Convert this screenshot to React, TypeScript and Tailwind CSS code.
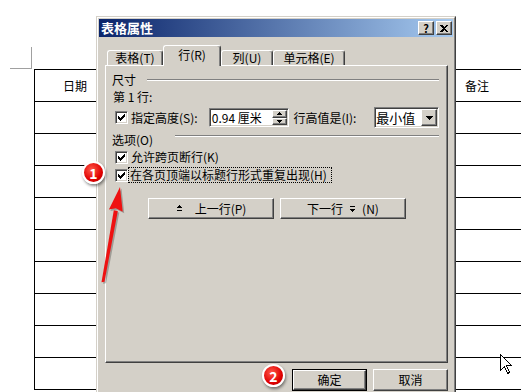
import React from "react";

const face = "bg-[#d4d0c8]";
const raised =
  "border border-t-white border-l-white border-r-[#404040] border-b-[#404040] shadow-[inset_-1px_-1px_#808080]";
const sunken =
  "border border-t-[#808080] border-l-[#808080] border-r-white border-b-white shadow-[inset_1px_1px_#404040,inset_-1px_-1px_#d4d0c8]";

const CHECK = ["......#", ".....##", "#...###", "##.###.", "#####..", ".###...", "..#...."];

function CheckBox() {
  return (
    <span className={`flex h-[13px] w-[13px] shrink-0 items-center justify-center bg-white ${sunken}`}>
      <svg width="7" height="7" viewBox="0 0 7 7" shapeRendering="crispEdges">
        {CHECK.flatMap((row, y) =>
          row.split("").map((c, x) => (c === "#" ? <rect key={`${x}-${y}`} x={x} y={y} width="1" height="1" fill="#000" /> : null))
        )}
      </svg>
    </span>
  );
}

function Groove({ className = "" }: { className?: string }) {
  return <div className={`h-[2px] flex-1 border-t border-b border-t-[#808080] border-b-white ${className}`} />;
}

function Tab({ label, active, w }: { label: string; active?: boolean; w: string }) {
  return (
    <div
      className={`${w} flex items-center justify-center rounded-t-[3px] border-l border-t border-l-white border-t-white ${face} ${
        active
          ? "relative z-10 -mb-px h-[21px] border-r border-r-[#404040] pb-[3px] shadow-[inset_-1px_0_#808080]"
          : "h-[15px] border-r border-r-[#404040] shadow-[inset_-1px_0_#808080]"
      }`}
    >
      {label}
    </div>
  );
}

function Badge({ n, className }: { n: string; className: string }) {
  return (
    <div
      className={`absolute flex h-[23px] w-[23px] items-center justify-center rounded-full border-2 border-white bg-[radial-gradient(circle_at_40%_35%,#ff5a4a,#e00000_60%,#a80000)] text-[14px] leading-none font-bold text-white shadow-[1px_2px_3px_rgba(0,0,0,0.45)] ${className}`}
    >
      {n}
    </div>
  );
}

function RowGlyph({ up }: { up?: boolean }) {
  return (
    <svg width="7" height="7" viewBox="0 0 7 7" shapeRendering="crispEdges">
      {up ? (
        <>
          <path d="M3 0h1v1h1v1h1v1H1V2h1V1h1z" fill="#000" />
          <rect x="1" y="5" width="5" height="1" fill="#000" />
        </>
      ) : (
        <>
          <rect x="1" y="1" width="5" height="1" fill="#000" />
          <path d="M1 4h5v1H5v1H4v1H3V6H2V5H1z" fill="#000" />
        </>
      )}
    </svg>
  );
}

export default function App() {
  const rows = Array.from({ length: 10 }, (_, i) => i);
  return (
    <div className="relative h-[392px] w-[521px] overflow-hidden bg-white font-['Noto_Sans_CJK_SC','Noto_Sans',sans-serif] text-[12px] leading-[14px] text-black">
      {/* document behind the dialog */}
      <div className="pt-[47px]">
        <div className="ml-[10px] h-[22px] w-[22px] border-r border-b border-[#a0a0a0]" />
        <div className="ml-[34px] w-[520px] border-t border-l border-black">
          {rows.map((i) => (
            <div key={i} className="grid h-[32px] grid-cols-[430px_1fr] items-center border-b border-black">
              {i === 0 && (
                <>
                  <span className="pl-[28px]">日期</span>
                  <span>备注</span>
                </>
              )}
            </div>
          ))}
        </div>
      </div>

      {/* table properties dialog */}
      <div className={`absolute top-[16px] left-[96px] h-[390px] w-[360px] border border-t-[#d4d0c8] border-l-[#d4d0c8] border-r-[#404040] border-b-[#404040] ${face}`}>
        <div className="h-full border border-t-white border-l-white border-r-[#808080] border-b-[#808080] p-px">
          <div className="flex h-[18px] items-center bg-[linear-gradient(to_right,#0a246a,#a6caf0)] pr-[1px] pl-[2px]">
            <span className="flex-1 text-[13px] font-bold text-white">表格属性</span>
            <div className={`flex h-[14px] w-[16px] items-center justify-center ${face} ${raised} text-[11px] leading-none font-bold`}>?</div>
            <div className={`ml-[2px] flex h-[14px] w-[16px] items-center justify-center ${face} ${raised}`}>
              <svg width="8" height="7" viewBox="0 0 8 7" shapeRendering="crispEdges">
                <path d="M0 0h2l2 2 2-2h2L5 3.5 8 7H6L4 5 2 7H0l3-3.5z" fill="#000" />
              </svg>
            </div>
          </div>

          <div className="ml-[6px] w-[343px]">
            <div className="mt-[8px] flex h-[20px] items-end pl-[2px]">
              <Tab w="w-[56px]" label="表格(T)" />
              <Tab w="w-[58px]" label="行(R)" active />
              <Tab w="w-[52px]" label="列(U)" />
              <Tab w="w-[72px]" label="单元格(E)" />
            </div>

            <div className={`flex h-[298px] flex-col border border-t-white border-l-white border-r-[#404040] border-b-[#404040] shadow-[inset_-1px_-1px_#808080] pr-[8px]`}>
              <div className="mt-[7px] flex h-[14px] items-center pl-[6px]">
                <span>尺寸</span>
                <Groove className="ml-[11px]" />
              </div>
              <div className="mt-[3px] h-[14px] pl-[7px]">第 1 行:</div>
              <div className="mt-[3px] flex h-[21px] items-center pl-[9px]">
                <CheckBox />
                <span className="ml-[3px] w-[78px]">指定高度(S):</span>
                <div className={`flex h-[19px] w-[81px] items-center bg-white ${sunken}`}>
                  <span className="flex-1 pl-[2px]">0.94 厘米</span>
                  <div className="mr-[1px] flex h-[15px] w-[15px] flex-col">
                    <div className={`flex flex-1 items-center justify-center ${face} ${raised}`}>
                      <svg width="5" height="3" viewBox="0 0 5 3" shapeRendering="crispEdges"><path d="M2 0h1v1h1v1h1v1H0V2h1V1h1z" fill="#000" /></svg>
                    </div>
                    <div className={`flex flex-1 items-center justify-center ${face} ${raised}`}>
                      <svg width="5" height="3" viewBox="0 0 5 3" shapeRendering="crispEdges"><path d="M0 0h5v1H4v1H3v1H2V2H1V1H0z" fill="#000" /></svg>
                    </div>
                  </div>
                </div>
                <span className="ml-[4px] w-[81px]">行高值是(I):</span>
                <div className={`flex h-[21px] w-[65px] items-center bg-white ${sunken}`}>
                  <span className="flex-1 pl-[1px] text-[13px]">最小值</span>
                  <div className={`mr-[1px] flex h-[17px] w-[16px] items-center justify-center ${face} ${raised}`}>
                    <svg width="7" height="4" viewBox="0 0 7 4" shapeRendering="crispEdges"><path d="M0 0h7v1H6v1H5v1H4v1H3V3H2V2H1V1H0z" fill="#000" /></svg>
                  </div>
                </div>
              </div>

              <div className="mt-[5px] flex h-[14px] items-start pl-[6px]">
                <span>选项(O)</span>
                <Groove className="mt-[2px] ml-[22px]" />
              </div>
              <div className="mt-[2px] flex h-[16px] items-center pl-[9px]">
                <CheckBox />
                <span className="ml-[3px]">允许跨页断行(K)</span>
              </div>
              <div className="mt-[2px] flex h-[16px] items-center pl-[9px]">
                <CheckBox />
                <span className="flex h-[16px] w-[204px] items-center border border-dotted border-black pl-[1px]">在各页顶端以标题行形式重复出现(H)</span>
              </div>

              <div className="mt-[15px] flex h-[21px] gap-[6px] pl-[42px]">
                <div className={`flex w-[126px] items-center justify-center gap-[6px] ${face} ${raised}`}>
                  <RowGlyph up />
                  <span className="ml-[6px]">上一行(P)</span>
                </div>
                <div className={`flex w-[126px] items-center justify-center gap-[6px] ${face} ${raised}`}>
                  <span>下一行</span>
                  <RowGlyph />
                  <span>(N)</span>
                </div>
              </div>
            </div>

            <div className="mt-[6px] flex justify-end gap-[6px]">
              <div className="h-[22px] w-[75px] border border-black">
                <div className={`flex h-full items-center justify-center ${face} ${raised}`}>确定</div>
              </div>
              <div className={`flex h-[22px] w-[75px] items-center justify-center ${face} ${raised}`}>取消</div>
            </div>
          </div>
        </div>
      </div>

      {/* annotations */}
      <Badge n="1" className="top-[161px] left-[82px]" />
      <Badge n="2" className="top-[364px] left-[262px]" />
      <svg className="absolute top-[180px] left-[95px]" width="40" height="110" viewBox="95 180 40 110">
        <g fill="rgba(0,0,0,0.25)" transform="translate(1.5 1.5)">
          <polygon points="101.5,282.3 104.5,281.7 117.8,210.9 113.8,210.3" />
          <polygon points="120,187 108.9,209.4 115.8,208.2 122.7,211.8" />
        </g>
        <polygon points="101.5,282.3 104.5,281.7 117.8,210.9 113.8,210.3" fill="#ee1111" />
        <polygon points="120,187 108.9,209.4 115.8,208.2 122.7,211.8" fill="#ee1111" />
      </svg>

      {/* mouse pointer */}
      <svg className="absolute top-[354px] left-[500px]" width="13" height="21" viewBox="0 0 13 21" shapeRendering="crispEdges">
        <path d="M0.5 0.5V16.5L4.5 12.5L7.5 19.5L9.5 18.5L6.5 11.5H11.5Z" fill="#fff" stroke="#000" strokeWidth="1" />
      </svg>
    </div>
  );
}
